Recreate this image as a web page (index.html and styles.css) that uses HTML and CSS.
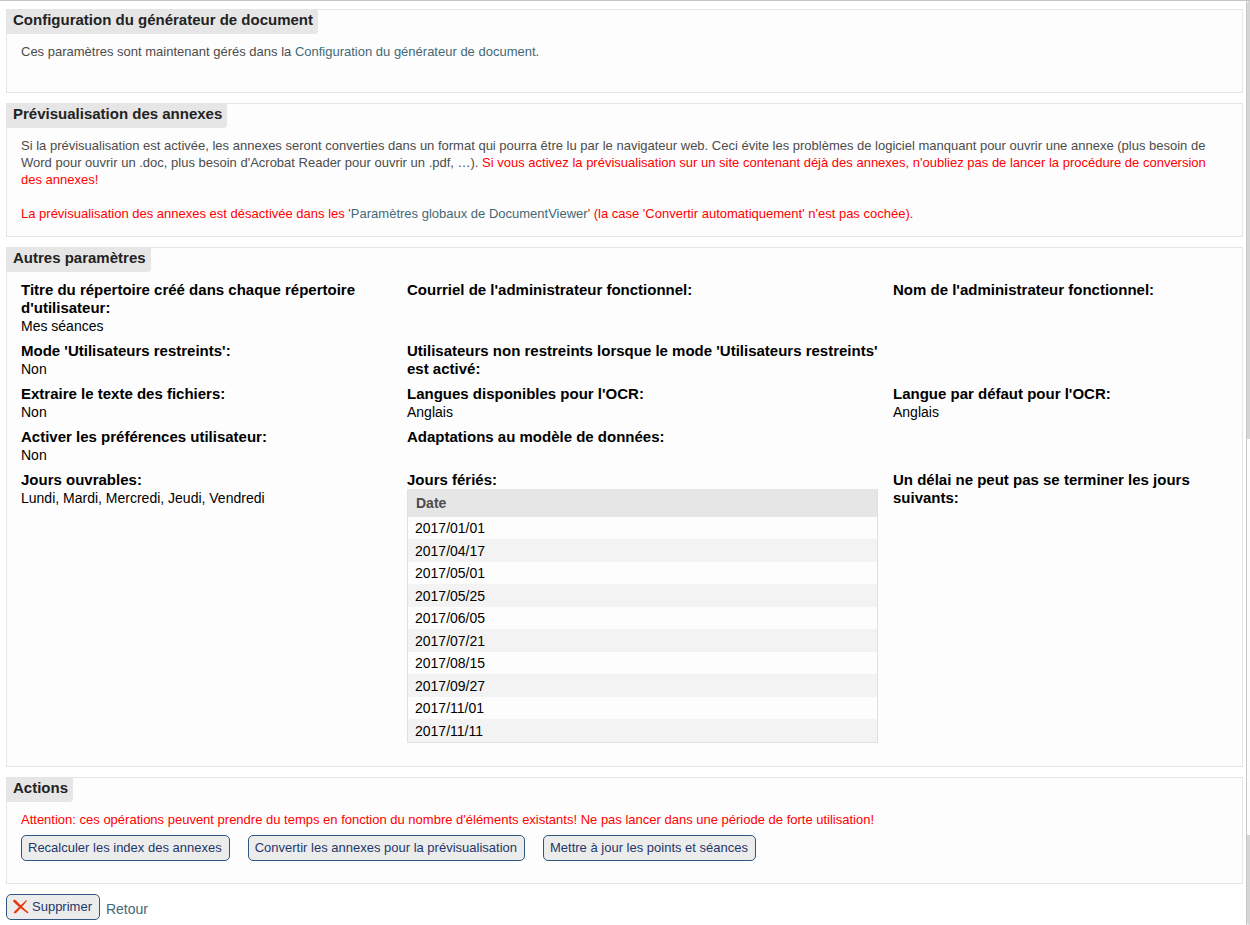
FILE: index.html
```html
<!DOCTYPE html>
<html lang="fr">
<head>
<meta charset="utf-8">
<title>Configuration</title>
<link rel="stylesheet" href="styles.css">
</head>
<body>
<div class="frame">
  <main class="content">
    <section class="panel panel-spaced">
      <h2 class="legend">Configuration du générateur de document</h2>
      <p class="note">Ces paramètres sont maintenant gérés dans la <a href="#">Configuration du générateur de document</a>.</p>
    </section>

    <section class="panel">
      <h2 class="legend">Prévisualisation des annexes</h2>
      <p class="note">Si la prévisualisation est activée, les annexes seront converties dans un format qui pourra être lu par le navigateur web. Ceci évite les problèmes de logiciel manquant pour ouvrir une annexe (plus besoin de Word pour ouvrir un .doc, plus besoin d'Acrobat Reader pour ouvrir un .pdf, …). <span class="warning">Si vous activez la prévisualisation sur un site contenant déjà des annexes, n'oubliez pas de lancer la procédure de conversion des annexes!</span></p>
      <p class="note note-next warning">La prévisualisation des annexes est désactivée dans les '<a href="#">Paramètres globaux de DocumentViewer</a>' (la case 'Convertir automatiquement' n'est pas cochée).</p>
    </section>

    <section class="panel panel-params">
      <h2 class="legend">Autres paramètres</h2>
      <dl class="params">
        <div class="param"><dt>Titre du répertoire créé dans chaque répertoire d'utilisateur:</dt><dd>Mes séances</dd></div>
        <div class="param"><dt>Courriel de l'administrateur fonctionnel:</dt><dd></dd></div>
        <div class="param"><dt>Nom de l'administrateur fonctionnel:</dt><dd></dd></div>

        <div class="param"><dt>Mode 'Utilisateurs restreints':</dt><dd>Non</dd></div>
        <div class="param param-last"><dt>Utilisateurs non restreints lorsque le mode 'Utilisateurs restreints' est activé:</dt><dd></dd></div>

        <div class="param"><dt>Extraire le texte des fichiers:</dt><dd>Non</dd></div>
        <div class="param"><dt>Langues disponibles pour l'OCR:</dt><dd>Anglais</dd></div>
        <div class="param"><dt>Langue par défaut pour l'OCR:</dt><dd>Anglais</dd></div>

        <div class="param"><dt>Activer les préférences utilisateur:</dt><dd>Non</dd></div>
        <div class="param param-last"><dt>Adaptations au modèle de données:</dt><dd></dd></div>

        <div class="param"><dt>Jours ouvrables:</dt><dd>Lundi, Mardi, Mercredi, Jeudi, Vendredi</dd></div>
        <div class="param">
          <dt id="holidays">Jours fériés:</dt>
          <dd>
            <table class="listing" aria-labelledby="holidays">
              <thead><tr><th scope="col">Date</th></tr></thead>
              <tbody>
                <tr><td>2017/01/01</td></tr>
                <tr><td>2017/04/17</td></tr>
                <tr><td>2017/05/01</td></tr>
                <tr><td>2017/05/25</td></tr>
                <tr><td>2017/06/05</td></tr>
                <tr><td>2017/07/21</td></tr>
                <tr><td>2017/08/15</td></tr>
                <tr><td>2017/09/27</td></tr>
                <tr><td>2017/11/01</td></tr>
                <tr><td>2017/11/11</td></tr>
              </tbody>
            </table>
          </dd>
        </div>
        <div class="param"><dt>Un délai ne peut pas se terminer les jours suivants:</dt><dd></dd></div>
      </dl>
    </section>

    <section class="panel panel-actions">
      <h2 class="legend">Actions</h2>
      <p class="note warning">Attention: ces opérations peuvent prendre du temps en fonction du nombre d'éléments existants! Ne pas lancer dans une période de forte utilisation!</p>
      <div class="actions">
        <button type="button" class="button">Recalculer les index des annexes</button>
        <button type="button" class="button">Convertir les annexes pour la prévisualisation</button>
        <button type="button" class="button">Mettre à jour les points et séances</button>
      </div>
    </section>

    <div class="footer">
      <button type="button" class="button button-delete">
        <svg class="cross" viewBox="0 0 16 16" aria-hidden="true">
          <path d="M.3 1.200C1 .600 2.300.700 3.100 1.500L7.700 6.300 12.900 1.400C13.600 1 14.200 1.600 13.700 2.300L9.100 7.700 15.200 12.900C15.800 13.600 15 14.500 14 14L7.700 9.200 3.100 13.900C2 14.700.4 14.100.9 13L6 7.900.4 2.700C0 2.200 0 1.600.3 1.200Z"/>
        </svg>
        Supprimer
      </button>
      <a href="#" class="back">Retour</a>
    </div>
  </main>
  <div class="scroll" aria-hidden="true">
    <div class="scroll-track scroll-before"></div>
    <div class="scroll-thumb"></div>
    <div class="scroll-track scroll-after"></div>
  </div>
</div>
</body>
</html>
```
FILE: styles.css
```css
* {
  box-sizing: border-box;
}

body {
  margin: 0;
  background: #fff;
  color: #000;
  font: 14px/18px "Liberation Sans", Arial, sans-serif;
}

a {
  color: #436976;
  text-decoration: none;
}

.frame {
  display: flex;
  min-height: 100vh;
  border-top: 1px solid #c8c4c1;
}

.content {
  flex: 1;
  min-width: 0;
  display: flex;
  flex-direction: column;
  gap: 10px;
  padding: 8px 3px 4px 6px;
}

.panel {
  border: 1px solid #e5e5e5;
  background: #fdfdfd;
  padding-bottom: 14px;
}

.panel-spaced {
  padding-bottom: 32px;
}

.panel-params {
  padding-bottom: 23px;
}

.panel-actions {
  padding-bottom: 22px;
}

.legend {
  width: fit-content;
  margin: 0;
  padding: 1px 5px 5px 6px;
  background: #e6e6e6;
  border-bottom-right-radius: 4px;
  color: #222;
  font-size: 15px;
  line-height: 18px;
}

.note {
  margin: 9px 14px 0;
  color: #4c4c4c;
  font-size: 13px;
  line-height: 17px;
}

.note-next {
  margin-top: 17px;
}

.warning {
  color: #f00;
}

.params {
  display: grid;
  grid-template-columns: 371fr 471fr 335fr;
  gap: 7px 15px;
  margin: 9px 14px 0;
}

.param {
  min-width: 0;
}

.param-last {
  grid-column-end: span 2;
  width: 60%;
}

.param dt {
  font-size: 15px;
  font-weight: bold;
}

.param dd {
  margin: 0;
}

.listing {
  width: 100%;
  border-collapse: separate;
  border-spacing: 0;
  border: 1px solid #e0e0e0;
  border-top: 0;
}

.listing th {
  height: 28px;
  padding: 0 8px;
  background: #e6e6e6;
  color: #4c4c4c;
  text-align: left;
}

.listing td {
  height: 22px;
  padding: 0 7px;
}

.listing tr:nth-child(even) td {
  height: 23px;
  background: #f3f3f3;
}

.actions {
  display: flex;
  flex-wrap: wrap;
  gap: 18px;
  margin: 7px 14px 0;
}

.button {
  height: 26px;
  padding: 0 7px 1px 6px;
  border: 1px solid #2f5680;
  border-radius: 5px;
  background: #ececec;
  color: #23386a;
  font: 13px/17px "Liberation Sans", Arial, sans-serif;
}

.footer {
  display: flex;
  align-items: center;
  gap: 6px;
}

.button-delete {
  display: flex;
  align-items: center;
  gap: 3px;
}

.cross {
  width: 16px;
  height: 16px;
  fill: #e8380d;
}

.back {
  padding-top: 4px;
}

.scroll {
  display: flex;
  flex-direction: column;
  width: 4px;
  border-left: 1px solid #c9c7c4;
}

.scroll-track {
  background: #d6d6d6;
}

.scroll-before {
  flex: 438;
  border-top-left-radius: 4px;
}

.scroll-thumb {
  flex: 397;
  background: #fcfcfc;
}

.scroll-after {
  flex: 90;
  border-bottom-left-radius: 4px;
}
```
